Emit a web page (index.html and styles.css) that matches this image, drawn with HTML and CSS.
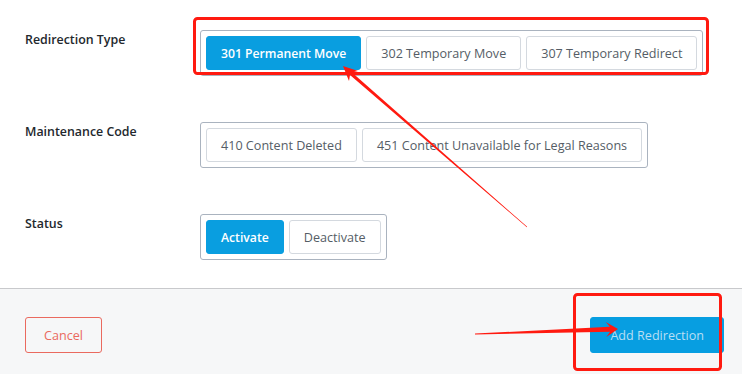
FILE: index.html
```html
<!DOCTYPE html>
<html lang="en">
<head>
  <meta charset="UTF-8">
  <title>Add Redirection</title>
  <link rel="stylesheet" href="styles.css">
</head>
<body>
  <div class="panel">
    <div class="form">
      <div class="row">
        <div class="label">Redirection Type</div>
        <div class="group">
          <button class="opt active">301 Permanent Move</button>
          <button class="opt">302 Temporary Move</button>
          <button class="opt">307 Temporary Redirect</button>
        </div>
      </div>
      <div class="row">
        <div class="label">Maintenance Code</div>
        <div class="group">
          <button class="opt">410 Content Deleted</button>
          <button class="opt">451 Content Unavailable for Legal Reasons</button>
        </div>
      </div>
      <div class="row">
        <div class="label">Status</div>
        <div class="group">
          <button class="opt active">Activate</button>
          <button class="opt">Deactivate</button>
        </div>
      </div>
    </div>

    <div class="footer">
      <button class="btn-cancel">Cancel</button>
      <button class="btn-add">Add Redirection</button>
    </div>
  </div>

  <!-- screenshot annotations -->
  <svg class="marks" width="742" height="374">
    <rect x="194.5" y="18.5" width="513" height="55" rx="3" />
    <rect x="574.5" y="294.5" width="146" height="75" rx="3" />
    <polygon points="343,66 358,71 352,72.5 527.2,226.8 526.8,227.2 350,75 349,81" />
    <polygon points="618,329 605.7,321.9 609.9,326.8 475,333.6 475,334.4 610.1,331.8 606.3,336.9" />
  </svg>
</body>
</html>
```

FILE: styles.css
```css
body {
  margin: 0;
  background: #fff;
  font-family: "Open Sans", "Noto Sans", sans-serif;
  color: #23282d;
  overflow: hidden;
}
.panel {
  width: 742px;
}
.form {
  padding: 30px 0 28px 25px;
}
.row {
  display: flex;
  align-items: flex-start;
  margin-bottom: 46px;
}
.row:last-child {
  margin-bottom: 0;
}
.label {
  width: 175px;
  padding-top: 1px;
  font-size: 12.4px;
  font-weight: 600;
  line-height: 18px;
}
.group {
  display: flex;
  gap: 5px;
  padding: 5px;
  border: 1px solid #aab3bf;
  border-radius: 3px;
}
.opt {
  height: 34px;
  padding: 0 14px;
  font-family: inherit;
  font-size: 12.6px;
  color: #555d66;
  background: #fff;
  border: 1px solid #d4d9df;
  border-radius: 3px;
}
.opt.active {
  background: #099ee0;
  border-color: #099ee0;
  color: #fff;
  font-weight: 600;
  font-size: 12.2px;
}
.footer {
  box-sizing: border-box;
  display: flex;
  justify-content: space-between;
  align-items: flex-start;
  height: 86px;
  padding: 28px 18px 0 25px;
  border-top: 1px solid #c8c9cc;
  background: #f6f7f8;
}
.footer button {
  height: 36px;
  font-family: inherit;
  font-size: 12.6px;
  border-radius: 3px;
}
.btn-cancel {
  padding: 0 18px;
  color: #ea6a5f;
  background: transparent;
  border: 1px solid #ea6a5f;
}
.btn-add {
  padding: 0 19px;
  color: #b8def4;
  background: #079ee1;
  border: 1px solid #079ee1;
}
.marks {
  position: absolute;
  top: 0;
  left: 0;
  pointer-events: none;
}
.marks rect {
  fill: none;
  stroke: #ff1a10;
  stroke-width: 3;
}
.marks polygon {
  fill: #ff1a10;
}
```
